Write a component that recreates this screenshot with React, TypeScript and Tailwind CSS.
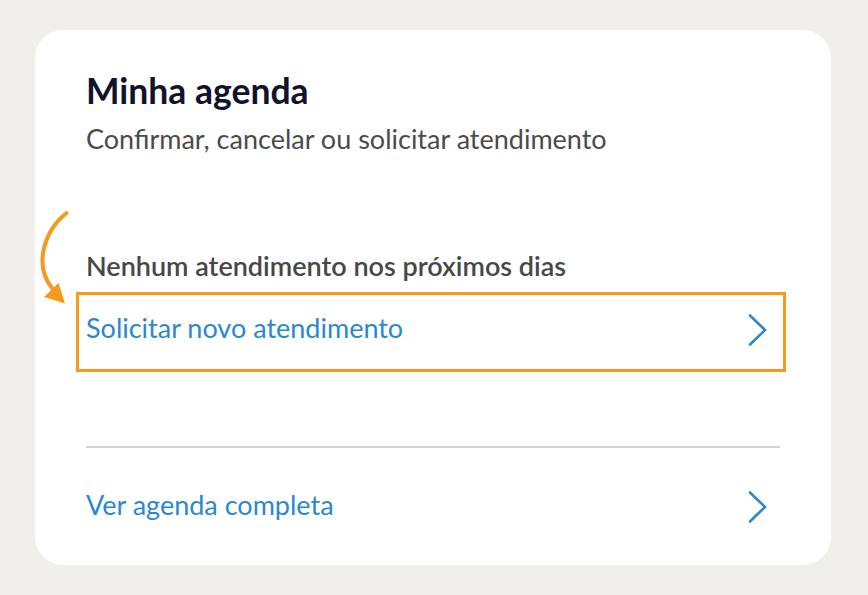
import React from 'react';

function Chevron({ className = '' }: { className?: string }) {
  return (
    <svg width="22" height="32" viewBox="0 0 22 32" fill="none" className={'shrink-0 ' + className}>
      <polyline points="3,1.5 18,16 3,30.5" stroke="#2a88d0" strokeWidth="2.6" strokeLinecap="round" strokeLinejoin="miter" />
    </svg>
  );
}

function HintArrow() {
  return (
    <svg width="40" height="100" viewBox="0 0 40 100" fill="none" className="absolute left-[2px] top-[178px]">
      <path d="M29.5 5 C 8 22, -4 56, 15 80" stroke="#f5991f" strokeWidth="4" strokeLinecap="round" fill="none" />
      <polygon points="7,89 28,95.5 21.5,75" fill="#f5991f" />
    </svg>
  );
}

export default function App() {
  return (
    <div className="min-h-screen w-full bg-[#f0efea] pt-[30px] pl-[35px] font-['Lato',sans-serif]">
      <div className="relative w-[796px] h-[535px] rounded-[28px] bg-white pl-[51px] pr-[51px] pt-[39px]">
        <HintArrow />
        <h1 className="text-[35.5px] leading-[44px] font-bold text-[#12132a]">Minha agenda</h1>
        <p className="mt-[9px] text-[27px] leading-[34px] text-[#4b4b4b]">Confirmar, cancelar ou solicitar atendimento</p>

        <p className="mt-[93px] text-[27px] leading-[34px] font-semibold text-[#474747]">
          Nenhum atendimento nos próximos dias
        </p>

        <a href="#" className="relative mt-[9px] flex h-[80px] items-center justify-between pr-[11px]">
          <span className="pointer-events-none absolute -left-[10px] -right-[6px] top-0 bottom-0 border-[3px] border-[#f5991f]" />
          <span className="mb-[9px] text-[27px] leading-[34px] text-[#2a88d0]">Solicitar novo atendimento</span>
          <Chevron className="mb-[4px]" />
        </a>

        <div className="mt-[74px] h-[2px] bg-[#d4d4d4]" />

        <a href="#" className="mt-[39.5px] flex items-center justify-between pr-[11px]">
          <span className="text-[27px] leading-[34px] text-[#2a88d0]">Ver agenda completa</span>
          <Chevron className="mt-[3px]" />
        </a>
      </div>
    </div>
  );
}
